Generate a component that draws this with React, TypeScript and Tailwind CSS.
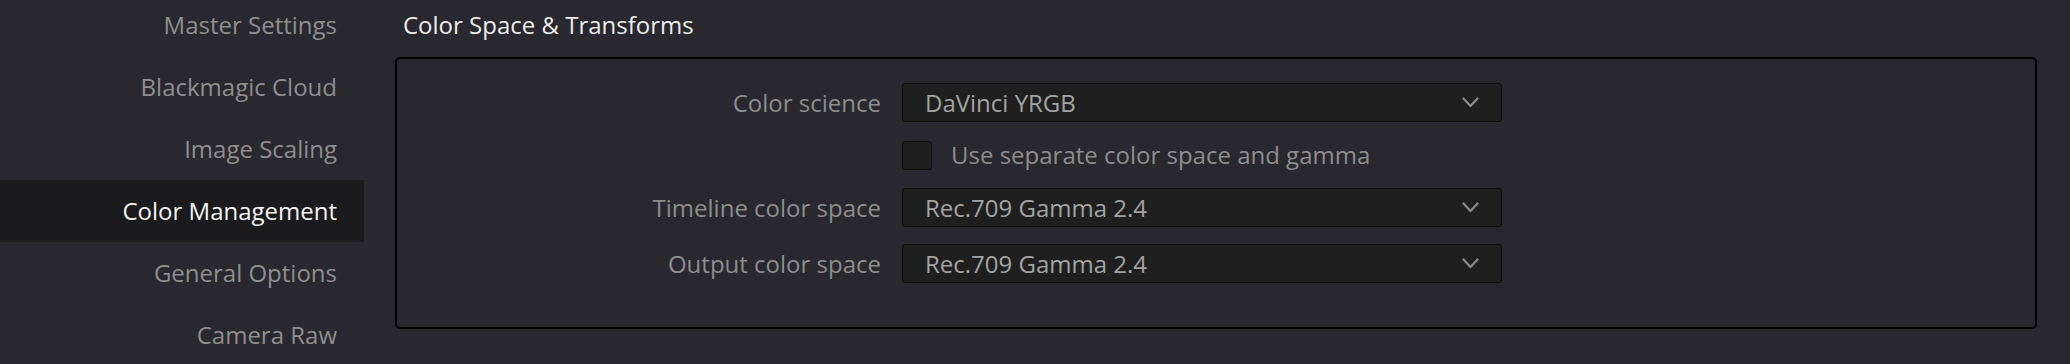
import React from "react";

const navItems = [
  "Master Settings",
  "Blackmagic Cloud",
  "Image Scaling",
  "Color Management",
  "General Options",
  "Camera Raw",
];

function Chevron() {
  return (
    <svg width="17" height="11" viewBox="0 0 17 11" fill="none">
      <polyline
        points="1.5,1.5 8.5,9 15.5,1.5"
        stroke="#8a8a8a"
        strokeWidth="2.2"
        strokeLinecap="round"
        strokeLinejoin="round"
      />
    </svg>
  );
}

function Select({ value }: { value: string }) {
  return (
    <div className="flex h-[39px] w-[600px] items-center justify-between rounded-[3px] border border-[#0c0c0c] bg-[#1f1f20] pl-[22px] pr-[22px] text-[#a3a3a3]">
      <span>{value}</span>
      <Chevron />
    </div>
  );
}

function Row({ label, children }: { label?: string; children: React.ReactNode }) {
  return (
    <div className="flex items-center">
      <div className="w-[505px] shrink-0 pr-[21px] text-right text-[#8d8d8d]">{label}</div>
      {children}
    </div>
  );
}

export default function App() {
  return (
    <div
      className="flex h-[364px] w-[2070px] overflow-hidden bg-[#28282e] text-[24px] leading-[32px]"
      style={{ fontFamily: '"Open Sans", "Noto Sans", sans-serif' }}
    >
      <div className="-mt-[6px] w-[364px] shrink-0">
        {navItems.map((item) => (
          <div
            key={item}
            className={
              item === "Color Management"
                ? "flex h-[62px] items-center justify-end bg-[#1b1b1d] pr-[27px] text-[#f2f2f2]"
                : "flex h-[62px] items-center justify-end pr-[27px] text-[#8e8e8e]"
            }
          >
            {item}
          </div>
        ))}
      </div>

      <div className="flex-1 pl-[31px] pr-[33px]">
        <div className="flex h-[50px] items-center pl-[8px] text-[#ececec]">
          Color Space &amp; Transforms
        </div>
        <div className="mt-[7px] flex h-[272px] flex-col gap-[17px] rounded-[5px] border-2 border-black pt-[24px]">
          <Row label="Color science">
            <Select value="DaVinci YRGB" />
          </Row>
          <Row>
            <div className="flex h-[32px] items-center">
              <div className="h-[29px] w-[30px] rounded-[3px] border border-[#0c0c0c] bg-[#1f1f20]" />
              <span className="ml-[19px] text-[#8d8d8d]">Use separate color space and gamma</span>
            </div>
          </Row>
          <Row label="Timeline color space">
            <Select value="Rec.709 Gamma 2.4" />
          </Row>
          <Row label="Output color space">
            <Select value="Rec.709 Gamma 2.4" />
          </Row>
        </div>
      </div>
    </div>
  );
}
